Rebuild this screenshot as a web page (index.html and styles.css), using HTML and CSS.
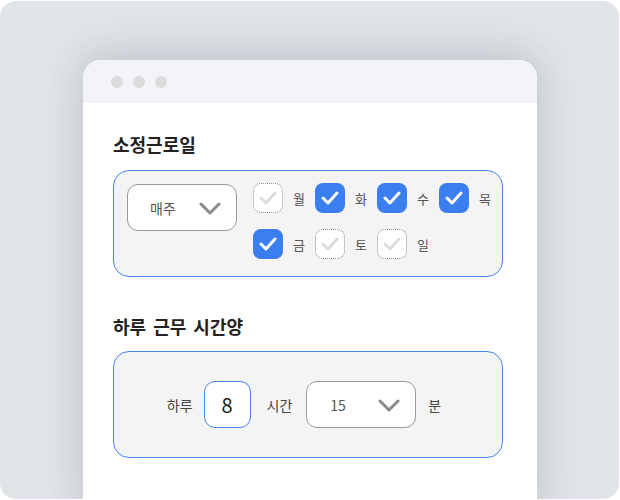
FILE: index.html
```html
<!DOCTYPE html>
<html lang="ko">
<head>
<meta charset="utf-8">
<link rel="stylesheet" href="styles.css">
</head>
<body>
<div class="desk">
  <div class="window">
    <div class="titlebar">
      <span class="dot"></span><span class="dot"></span><span class="dot"></span>
    </div>
    <div class="content">
      <h2 class="heading">소정근로일</h2>
      <div class="panel panel-days">
        <div class="select select-period">
          <span class="select-text">매주</span>
          <svg class="chev" width="22" height="13" viewBox="0 0 22 13"><polyline points="2,2 11,11 20,2" fill="none" stroke="#8a8a8a" stroke-width="3" stroke-linecap="round" stroke-linejoin="round"/></svg>
        </div>
        <div class="days">
          <div class="day"><span class="cb off"><svg width="18" height="14" viewBox="0 0 18 14"><polyline points="2,7 7,12 16,2" fill="none" stroke="#dcdcdc" stroke-width="3" stroke-linecap="round" stroke-linejoin="round"/></svg></span><span class="day-label">월</span></div>
          <div class="day"><span class="cb on"><svg width="18" height="14" viewBox="0 0 18 14"><polyline points="2,7 7,12 16,2" fill="none" stroke="#fff" stroke-width="3" stroke-linecap="round" stroke-linejoin="round"/></svg></span><span class="day-label">화</span></div>
          <div class="day"><span class="cb on"><svg width="18" height="14" viewBox="0 0 18 14"><polyline points="2,7 7,12 16,2" fill="none" stroke="#fff" stroke-width="3" stroke-linecap="round" stroke-linejoin="round"/></svg></span><span class="day-label">수</span></div>
          <div class="day"><span class="cb on"><svg width="18" height="14" viewBox="0 0 18 14"><polyline points="2,7 7,12 16,2" fill="none" stroke="#fff" stroke-width="3" stroke-linecap="round" stroke-linejoin="round"/></svg></span><span class="day-label">목</span></div>
          <div class="day"><span class="cb on"><svg width="18" height="14" viewBox="0 0 18 14"><polyline points="2,7 7,12 16,2" fill="none" stroke="#fff" stroke-width="3" stroke-linecap="round" stroke-linejoin="round"/></svg></span><span class="day-label">금</span></div>
          <div class="day"><span class="cb off"><svg width="18" height="14" viewBox="0 0 18 14"><polyline points="2,7 7,12 16,2" fill="none" stroke="#dcdcdc" stroke-width="3" stroke-linecap="round" stroke-linejoin="round"/></svg></span><span class="day-label">토</span></div>
          <div class="day"><span class="cb off"><svg width="18" height="14" viewBox="0 0 18 14"><polyline points="2,7 7,12 16,2" fill="none" stroke="#dcdcdc" stroke-width="3" stroke-linecap="round" stroke-linejoin="round"/></svg></span><span class="day-label">일</span></div>
        </div>
      </div>
      <h2 class="heading heading-2">하루 근무 시간양</h2>
      <div class="panel panel-time">
        <span class="label l-day">하루</span>
        <div class="num-input">8</div>
        <span class="label l-hour">시간</span>
        <div class="select select-min">
          <span class="select-text">15</span>
          <svg class="chev" width="22" height="13" viewBox="0 0 22 13"><polyline points="2,2 11,11 20,2" fill="none" stroke="#8a8a8a" stroke-width="3" stroke-linecap="round" stroke-linejoin="round"/></svg>
        </div>
        <span class="label">분</span>
      </div>
    </div>
  </div>
</div>
</body>
</html>
```
FILE: styles.css
```css
* { box-sizing: border-box; }
html, body { margin: 0; padding: 0; background: #fff; }
body {
  font-family: "Noto Sans CJK KR", "Noto Sans", sans-serif;
  width: 620px;
  height: 500px;
  overflow: hidden;
}
.desk {
  margin-top: 1px;
  width: 619px;
  height: 498px;
  background: #e1e4e8;
  border-radius: 16px;
  padding: 59px 0 0 83px;
  overflow: hidden;
}
.window {
  width: 454px;
  height: 460px;
  background: #fff;
  border-radius: 18px 18px 0 0;
  box-shadow: 0 -4px 40px rgba(60, 66, 80, 0.22);
  overflow: hidden;
}
.titlebar {
  height: 43px;
  background: #f3f4f7;
  display: flex;
  align-items: center;
  gap: 10px;
  padding-left: 28px;
}
.dot {
  width: 12px;
  height: 12px;
  border-radius: 50%;
  background: #dcdcdc;
}
.content {
  padding: 28px 34px 0 30px;
}
.heading {
  margin: 0;
  font-size: 18px;
  line-height: 26px;
  font-weight: 700;
  color: #222;
  word-spacing: 2px;
}
.heading-2 { margin-top: 36px; }
.panel {
  margin-top: 13px;
  background: #f4f4f4;
  border: 1px solid #4a83ea;
  border-radius: 16px;
}
.panel-days {
  display: flex;
  align-items: flex-start;
  padding: 12px 10px 16px 13px;
  height: 107px;
}
.select {
  background: #fff;
  border: 1px solid #9a9a9a;
  border-radius: 11px;
  height: 47px;
  width: 110px;
  display: flex;
  align-items: center;
  justify-content: space-between;
  padding: 0 15px 0 22px;
}
.select-period { margin-top: 1px; }
.select-text {
  font-size: 14px;
  color: #555;
}
.chev { display: block; margin-top: 2px; }
.days {
  margin-left: 16px;
  display: grid;
  grid-template-columns: repeat(4, 53px);
  column-gap: 9px;
  row-gap: 16px;
}
.day {
  display: flex;
  align-items: center;
  gap: 10px;
}
.cb {
  width: 30px;
  height: 30px;
  border-radius: 8px;
  display: flex;
  align-items: center;
  justify-content: center;
  flex: none;
}
.cb.on { background: #3b7eef; }
.cb.off {
  background: #fff;
  border: 1px dotted #8c8c8c;
}
.day-label {
  font-size: 13px;
  color: #555;
}
.panel-time {
  margin-top: 12px;
  height: 107px;
  display: flex;
  align-items: center;
  justify-content: center;
  padding-right: 8px;
}
.label {
  font-size: 14px;
  color: #444;
}
.l-day { margin-right: 11px; }
.l-hour { margin-right: 14px; }
.num-input {
  width: 47px;
  height: 47px;
  margin-right: 16px;
  background: #fff;
  border: 1px solid #4a83ea;
  border-radius: 11px;
  display: flex;
  align-items: center;
  justify-content: center;
  font-size: 20px;
  color: #222;
}
.select-min {
  padding-left: 23px;
  margin-right: 12px;
}
```
